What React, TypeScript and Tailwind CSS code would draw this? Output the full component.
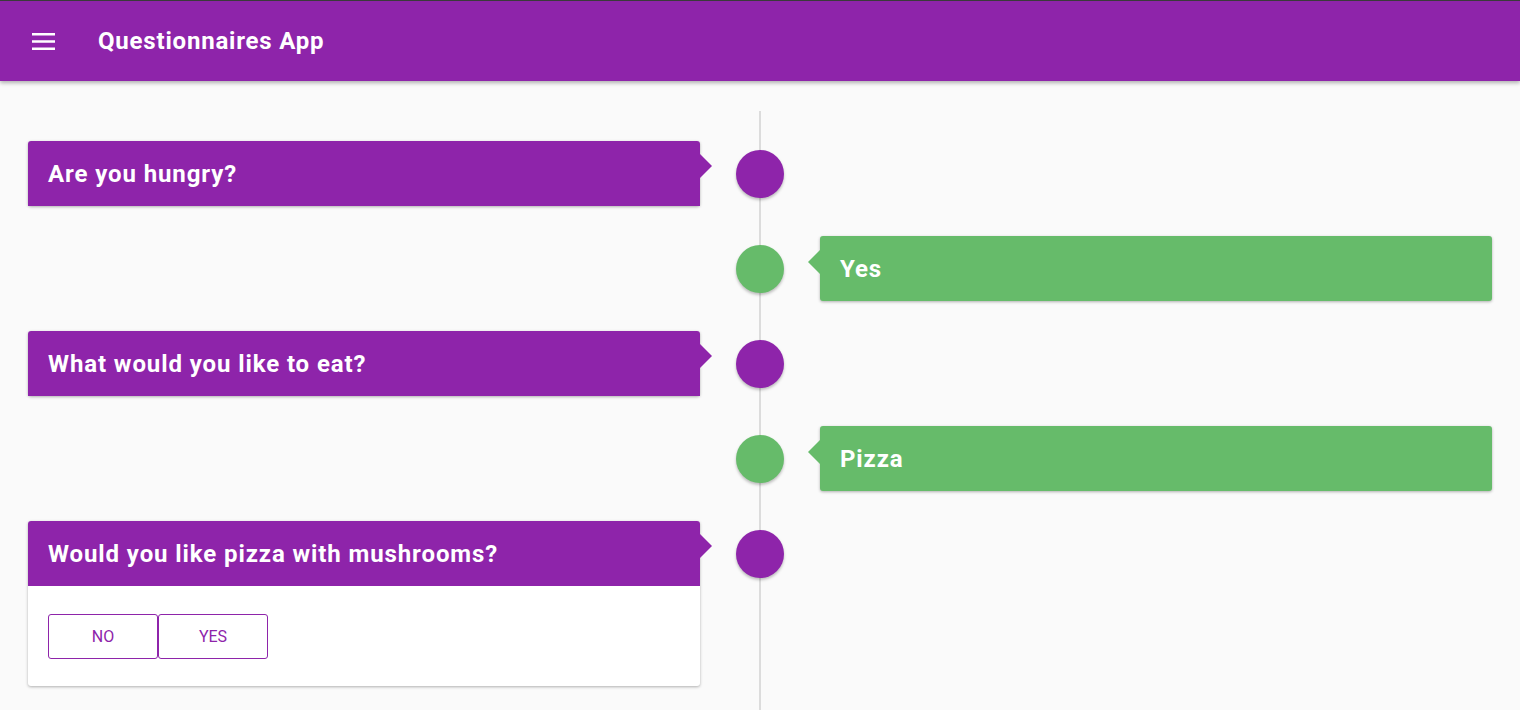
import React from "react"

type Entry =
  | { kind: "question"; text: string; options?: string[] }
  | { kind: "answer"; text: string }

const entries: Entry[] = [
  { kind: "question", text: "Are you hungry?" },
  { kind: "answer", text: "Yes" },
  { kind: "question", text: "What would you like to eat?" },
  { kind: "answer", text: "Pizza" },
  { kind: "question", text: "Would you like pizza with mushrooms?", options: ["No", "Yes"] },
]

function MenuIcon() {
  return (
    <svg width="23" height="17" viewBox="0 0 23 17" fill="white">
      <rect x="0" y="0" width="23" height="2.5" />
      <rect x="0" y="7.25" width="23" height="2.5" />
      <rect x="0" y="14.5" width="23" height="2.5" />
    </svg>
  )
}

function Dot({ color }: { color: string }) {
  return (
    <div className="flex h-[65px] items-center justify-center">
      <div className={`h-12 w-12 rounded-full shadow-[0_2px_3px_rgba(0,0,0,0.25)] ${color}`} />
    </div>
  )
}

function QuestionCard({ entry }: { entry: Extract<Entry, { kind: "question" }> }) {
  return (
    <div className="relative rounded-[3px] bg-white shadow-[0_1px_3px_rgba(0,0,0,0.3)]">
      <div className="flex h-[65px] items-center rounded-t-[3px] bg-[#8e24aa] px-5">
        <span className="text-[24px] font-bold tracking-[0.9px] text-white">{entry.text}</span>
      </div>
      {/* arrow */}
      <div className="absolute right-[-12px] top-[13px] h-0 w-0 border-y-[12px] border-l-[12px] border-y-transparent border-l-[#8e24aa]" />
      {entry.options && (
        <div className="flex px-5 pt-7 pb-[27px]">
          {entry.options.map((o) => (
            <button
              key={o}
              className="h-[45px] w-[110px] rounded-[3px] border border-[#8e24aa] text-[16px] uppercase text-[#8e24aa]"
            >
              {o}
            </button>
          ))}
        </div>
      )}
    </div>
  )
}

function AnswerCard({ text }: { text: string }) {
  return (
    <div className="relative flex h-[65px] items-center rounded-[3px] bg-[#66bb6a] px-5 shadow-[0_1px_3px_rgba(0,0,0,0.3)]">
      <div className="absolute left-[-12px] top-[14px] h-0 w-0 border-y-[12px] border-r-[12px] border-y-transparent border-r-[#66bb6a]" />
      <span className="text-[24px] font-bold tracking-[0.9px] text-white">{text}</span>
    </div>
  )
}

export default function App() {
  return (
    <div className="min-h-[710px] bg-[#fafafa] font-['Roboto',sans-serif]">
      {/* Toolbar */}
      <header className="relative z-10 flex h-[81px] items-center gap-[43px] border-t border-[#3a3a3a] bg-[#8e24aa] pl-[32px] shadow-[0_2px_4px_rgba(0,0,0,0.3)]">
        <MenuIcon />
        <h1 className="text-[24px] font-bold tracking-[0.8px] text-white">Questionnaires App</h1>
      </header>

      {/* Timeline */}
      <div className="mt-[30px] grid grid-cols-[672px_120px_672px] gap-y-[30px] bg-[linear-gradient(90deg,transparent_759px,#dcdcdc_759px,#dcdcdc_761px,transparent_761px)] px-7 pt-[30px] pb-10">
        {entries.map((e, i) =>
          e.kind === "question" ? (
            <React.Fragment key={i}>
              <QuestionCard entry={e} />
              <Dot color="bg-[#8e24aa]" />
              <div />
            </React.Fragment>
          ) : (
            <React.Fragment key={i}>
              <div />
              <Dot color="bg-[#66bb6a]" />
              <AnswerCard text={e.text} />
            </React.Fragment>
          )
        )}
      </div>
    </div>
  )
}
